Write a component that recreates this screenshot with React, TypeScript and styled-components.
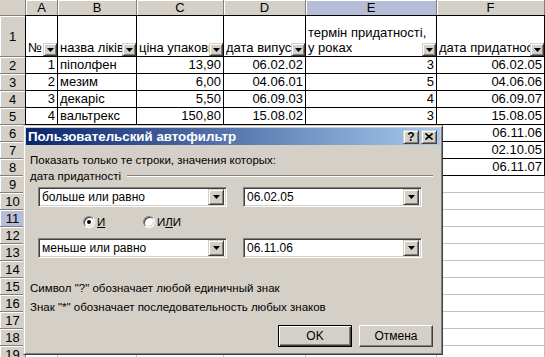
import * as React from "react";
import styled, { createGlobalStyle } from "styled-components";

const GlobalStyle = createGlobalStyle`
  html, body {
    margin: 0;
    padding: 0;
    background: #fff;
    overflow: hidden;
  }
`;

const Screen = styled.div`
  position: relative;
  width: 545px;
  height: 357px;
  overflow: hidden;
  font-family: "Liberation Sans", Arial, sans-serif;
  color: #000;
`;

const Sheet = styled.div`
  display: grid;
  grid-template-columns: 26px 32px 79px 87px 82px 131px 108px;
  grid-template-rows: 16px 41px repeat(18, 17px);
`;

const Corner = styled.div`
  background: #d4d0c8;
  border-right: 1px solid #808080;
  border-bottom: 1px solid #808080;
`;

const HeadCell = styled.div<{ $active?: boolean }>`
  background: ${(p) => (p.$active ? "#b6bdd6" : "#d4d0c8")};
  border-right: 1px solid #808080;
  border-bottom: 1px solid #808080;
  box-shadow: inset 1px 1px 0 #fff;
  display: flex;
  align-items: center;
  justify-content: center;
  font-size: 13px;
  line-height: 15px;
`;

const Cell = styled.div<{ $table?: boolean; $align?: string; $left?: boolean; $top?: boolean }>`
  position: relative;
  min-width: 0;
  border-right: 1px solid ${(p) => (p.$table ? "#000" : "#c0c0c0")};
  border-bottom: 1px solid ${(p) => (p.$table ? "#000" : "#c0c0c0")};
  box-shadow: ${(p) =>
    [p.$left ? "-1px 0 0 #000" : "", p.$top ? "0 -1px 0 #000" : "", p.$left && p.$top ? "-1px -1px 0 #000" : ""]
      .filter(Boolean)
      .join(", ") || "none"};
  display: flex;
  align-items: flex-end;
  justify-content: ${(p) => (p.$align === "right" ? "flex-end" : "flex-start")};
  padding: 0 2px 1px;
  font-size: 13px;
  line-height: 15px;
  overflow: hidden;
`;

const CellText = styled.span<{ $wrap?: boolean }>`
  white-space: ${(p) => (p.$wrap ? "normal" : "nowrap")};
  overflow: hidden;
`;

const FilterButton = styled.div`
  position: absolute;
  right: 0;
  bottom: 0;
  width: 14px;
  height: 13px;
  box-sizing: border-box;
  background: #d4d0c8;
  border: 1px solid;
  border-color: #d4d0c8 #404040 #404040 #d4d0c8;
  box-shadow: inset 1px 1px 0 #fff, inset -1px -1px 0 #808080;
  display: flex;
  align-items: center;
  justify-content: center;
`;

const Dialog = styled.div`
  position: absolute;
  left: 23px;
  top: 125px;
  width: 420px;
  height: 230px;
  box-sizing: border-box;
  background: #d4d0c8;
  border: 1px solid;
  border-color: #d4d0c8 #404040 #404040 #d4d0c8;
  box-shadow: inset 1px 1px 0 #fff, inset -1px -1px 0 #808080;
  padding: 2px;
  display: flex;
  flex-direction: column;
  font-size: 11.5px;
`;

const TitleBar = styled.div`
  height: 17px;
  flex: none;
  background: linear-gradient(to right, #0a246a, #a6caf0);
  display: flex;
  align-items: center;
  padding: 0 3px 0 2px;
  gap: 2px;
`;

const Title = styled.span`
  flex: 1;
  color: #fff;
  font-weight: bold;
  font-size: 13.3px;
  white-space: nowrap;
`;

const CaptionButton = styled.div`
  width: 16px;
  height: 14px;
  box-sizing: border-box;
  background: #d4d0c8;
  border: 1px solid;
  border-color: #d4d0c8 #404040 #404040 #d4d0c8;
  box-shadow: inset 1px 1px 0 #fff, inset -1px -1px 0 #808080;
  display: flex;
  align-items: center;
  justify-content: center;
  font-weight: bold;
  font-size: 12px;
  line-height: 12px;
`;

const Body = styled.div`
  display: flex;
  flex-direction: column;
  padding: 0 7px 0 4px;
`;

const Line = styled.div<{ $gap: number }>`
  margin-top: ${(p) => p.$gap}px;
  height: 14px;
  line-height: 14px;
  white-space: nowrap;
  display: flex;
  align-items: center;
`;

const Groove = styled.div`
  flex: 1;
  margin-left: 6px;
  height: 0;
  border-top: 1px solid #808080;
  border-bottom: 1px solid #fff;
`;

const FieldRow = styled.div<{ $gap: number }>`
  margin-top: ${(p) => p.$gap}px;
  margin-left: 8px;
  display: flex;
  gap: 16px;
`;

const Combo = styled.div<{ $w: number }>`
  width: ${(p) => p.$w}px;
  height: 20px;
  box-sizing: border-box;
  border: 1px solid;
  border-color: #808080 #fff #fff #808080;
  box-shadow: inset 1px 1px 0 #404040, inset -1px -1px 0 #d4d0c8;
  background: #fff;
  padding: 2px;
  display: flex;
  align-items: center;
`;

const ComboText = styled.span`
  flex: 1;
  padding-left: 1px;
  white-space: nowrap;
  font-size: 12px;
`;

const DropButton = styled.div`
  width: 16px;
  height: 16px;
  box-sizing: border-box;
  background: #d4d0c8;
  border: 1px solid;
  border-color: #d4d0c8 #404040 #404040 #d4d0c8;
  box-shadow: inset 1px 1px 0 #fff, inset -1px -1px 0 #808080;
  display: flex;
  align-items: center;
  justify-content: center;
`;

const RadioRow = styled.div`
  margin-top: 8px;
  height: 14px;
  padding-left: 53px;
  display: flex;
  align-items: center;
`;

const RadioOption = styled.label<{ $w?: number }>`
  width: ${(p) => (p.$w ? `${p.$w}px` : "auto")};
  display: flex;
  align-items: center;
  gap: 2px;
`;

const RadioCircle = styled.span<{ $checked?: boolean }>`
  width: 12px;
  height: 12px;
  box-sizing: border-box;
  border-radius: 50%;
  border: 1px solid;
  border-color: #808080 #fff #fff #808080;
  box-shadow: inset 1px 1px 0 #404040, inset -1px -1px 0 #d4d0c8;
  background: #fff;
  display: flex;
  align-items: center;
  justify-content: center;
  &::after {
    content: "";
    width: 4px;
    height: 4px;
    border-radius: 50%;
    background: #000;
    display: ${(p) => (p.$checked ? "block" : "none")};
  }
`;

const ButtonRow = styled.div`
  margin-top: 11px;
  display: flex;
  justify-content: flex-end;
  gap: 7px;
`;

const PushButton = styled.div<{ $default?: boolean }>`
  width: 74px;
  height: 22px;
  box-sizing: border-box;
  background: #d4d0c8;
  border: 1px solid;
  border-color: ${(p) => (p.$default ? "#000" : "#fff #404040 #404040 #fff")};
  box-shadow: ${(p) =>
    p.$default ? "inset 1px 1px 0 #fff, inset -1px -1px 0 #404040, inset -2px -2px 0 #808080" : "inset -1px -1px 0 #808080"};
  display: flex;
  align-items: center;
  justify-content: center;
  font-size: 12px;
`;

const Arrow = () => (
  <svg width="7" height="4" viewBox="0 0 7 4">
    <polygon points="0,0 7,0 3.5,4" fill="#000" />
  </svg>
);

const CloseGlyph = () => (
  <svg width="8" height="7" viewBox="0 0 8 7">
    <path d="M0.5 0.5 L7.5 6.5 M7.5 0.5 L0.5 6.5" stroke="#000" strokeWidth="1.6" />
  </svg>
);

const columns = ["A", "B", "C", "D", "E", "F"];
const align = ["right", "left", "right", "right", "right", "right"];

const data: string[][] = [
  ["№", "назва ліків", "ціна упаковки", "дата випуску", "термін придатності, у роках", "дата придатності"],
  ["1", "піполфен", "13,90", "06.02.02", "3", "06.02.05"],
  ["2", "мезим", "6,00", "04.06.01", "5", "04.06.06"],
  ["3", "декаріс", "5,50", "06.09.03", "4", "06.09.07"],
  ["4", "вальтрекс", "150,80", "15.08.02", "3", "15.08.05"],
  ["5", "аспірин", "4,20", "06.11.04", "2", "06.11.06"],
  ["6", "фестал", "8,75", "02.10.03", "2", "02.10.05"],
  ["7", "но-шпа", "12,40", "06.11.05", "2", "06.11.07"],
];

const TOTAL_ROWS = 19;

export default function App() {
  const body: React.ReactNode[] = [];
  for (let r = 1; r <= TOTAL_ROWS; r++) {
    body.push(
      <HeadCell key={`h${r}`} $active={r === 11}>
        {r}
      </HeadCell>
    );
    const values = data[r - 1];
    columns.forEach((c, i) => {
      const inTable = r <= 8;
      const header = r === 1;
      body.push(
        <Cell
          key={`${c}${r}`}
          $table={inTable}
          $left={inTable && i === 0}
          $top={header}
          $align={header ? "left" : align[i]}
        >
          {values && <CellText $wrap={header && i === 4}>{values[i]}</CellText>}
          {header && (
            <FilterButton>
              <Arrow />
            </FilterButton>
          )}
        </Cell>
      );
    });
  }

  return (
    <Screen>
      <GlobalStyle />
      <Sheet>
        <Corner />
        {columns.map((c) => (
          <HeadCell key={c} $active={c === "E"}>
            {c}
          </HeadCell>
        ))}
        {body}
      </Sheet>

      <Dialog>
        <TitleBar>
          <Title>Пользовательский автофильтр</Title>
          <CaptionButton>?</CaptionButton>
          <CaptionButton>
            <CloseGlyph />
          </CaptionButton>
        </TitleBar>
        <Body>
          <Line $gap={8}>Показать только те строки, значения которых:</Line>
          <Line $gap={2}>
            дата придатності
            <Groove />
          </Line>
          <FieldRow $gap={4}>
            <Combo $w={189}>
              <ComboText>больше или равно</ComboText>
              <DropButton>
                <Arrow />
              </DropButton>
            </Combo>
            <Combo $w={179}>
              <ComboText>06.02.05</ComboText>
              <DropButton>
                <Arrow />
              </DropButton>
            </Combo>
          </FieldRow>
          <RadioRow>
            <RadioOption $w={60}>
              <RadioCircle $checked />
              <u>И</u>
            </RadioOption>
            <RadioOption>
              <RadioCircle />
              <span>
                И<u>Л</u>И
              </span>
            </RadioOption>
          </RadioRow>
          <FieldRow $gap={9}>
            <Combo $w={189}>
              <ComboText>меньше или равно</ComboText>
              <DropButton>
                <Arrow />
              </DropButton>
            </Combo>
            <Combo $w={179}>
              <ComboText>06.11.06</ComboText>
              <DropButton>
                <Arrow />
              </DropButton>
            </Combo>
          </FieldRow>
          <Line $gap={23}>Символ "?" обозначает любой единичный знак</Line>
          <Line $gap={5}>Знак "*" обозначает последовательность любых знаков</Line>
          <ButtonRow>
            <PushButton $default>OK</PushButton>
            <PushButton>Отмена</PushButton>
          </ButtonRow>
        </Body>
      </Dialog>
    </Screen>
  );
}
